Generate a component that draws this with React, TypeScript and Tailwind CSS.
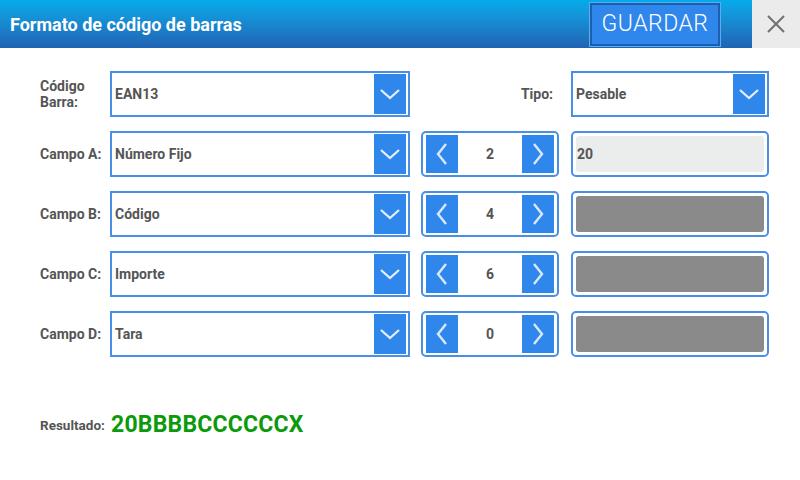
import React from 'react'

const font = { fontFamily: 'Roboto, "Liberation Sans", sans-serif' }

const ChevronDown = () => (
  <svg width="22" height="14" viewBox="0 0 22 14" fill="none">
    <path d="M2 3 L11 11 L20 3" stroke="#e6f0fc" strokeWidth="2.2" />
  </svg>
)

const Arrow: React.FC<{ dir: 'left' | 'right' }> = ({ dir }) => (
  <svg width="14" height="24" viewBox="0 0 14 24" fill="none">
    <path
      d={dir === 'left' ? 'M11 2 L3 12 L11 22' : 'M3 2 L11 12 L3 22'}
      stroke="#dbe8fa"
      strokeWidth="2.4"
    />
  </svg>
)

const Dropdown: React.FC<{ value: string; width: string }> = ({ value, width }) => (
  <div
    className={`${width} h-[46px] border-2 border-[#4a8fe6] bg-white flex items-center justify-between pl-[3px] pr-[2px]`}
  >
    <span className="text-[14px] font-bold text-[#555555]">{value}</span>
    <div className="w-[32px] h-[40px] bg-[#2f87ec] flex items-center justify-center">
      <ChevronDown />
    </div>
  </div>
)

const Stepper: React.FC<{ value: number }> = ({ value }) => (
  <div className="w-[138px] h-[46px] ml-[11px] rounded-[5px] border-2 border-[#4a8fe6] bg-white flex items-center justify-between px-[3px]">
    <div className="w-[32px] h-[38px] bg-[#2f87ec] flex items-center justify-center">
      <Arrow dir="left" />
    </div>
    <span className="text-[14px] font-bold text-[#555555]">{value}</span>
    <div className="w-[32px] h-[38px] bg-[#2f87ec] flex items-center justify-center">
      <Arrow dir="right" />
    </div>
  </div>
)

const Field: React.FC<{ value?: string; filled?: boolean }> = ({ value, filled }) => (
  <div className="w-[198px] h-[46px] ml-[12px] rounded-[5px] border-2 border-[#4a8fe6] bg-white p-[3px]">
    <div
      className={`w-full h-full rounded-[3px] flex items-center pl-[1px] ${
        filled ? 'bg-[#ebecec]' : 'bg-[#8a8a8a]'
      }`}
    >
      <span className="text-[14px] font-bold text-[#555555]">{value}</span>
    </div>
  </div>
)

const campos = [
  { label: 'Campo A:', value: 'Número Fijo', step: 2, field: '20', filled: true },
  { label: 'Campo B:', value: 'Código', step: 4 },
  { label: 'Campo C:', value: 'Importe', step: 6 },
  { label: 'Campo D:', value: 'Tara', step: 0 },
]

export default function App() {
  return (
    <div className="w-[800px] h-[480px] bg-white overflow-hidden" style={font}>
      <header className="h-[48px] flex items-stretch bg-gradient-to-b from-[#03abeb] to-[#1f64b4]">
        <h1 className="flex-1 flex items-center pl-[10px] text-white text-[18px] font-bold">
          Formato de código de barras
        </h1>
        <div className="flex items-center pr-[32px]">
          <button className="w-[130px] h-[43px] bg-[#2f87ec] border-2 border-[#1d5fae] outline outline-1 outline-[#58aef0] text-white text-[23px] font-light tracking-[0.5px]">
            GUARDAR
          </button>
        </div>
        <div className="w-[48px] bg-[#ebebeb] flex items-center justify-center">
          <svg width="20" height="20" viewBox="0 0 20 20">
            <path d="M2 2 L18 18 M18 2 L2 18" stroke="#707070" strokeWidth="2" />
          </svg>
        </div>
      </header>

      <main className="pt-[23px] pl-[40px] flex flex-col gap-[14px]">
        <div className="flex items-center">
          <div className="w-[70px] text-[14px] font-bold text-[#555555] leading-[16px]">
            Código
            <br />
            Barra:
          </div>
          <Dropdown value="EAN13" width="w-[300px]" />
          <div className="w-[143px] text-right text-[14px] font-bold text-[#555555]">Tipo:</div>
          <div className="ml-[18px]">
            <Dropdown value="Pesable" width="w-[198px]" />
          </div>
        </div>

        {campos.map((c) => (
          <div key={c.label} className="flex items-center">
            <div className="w-[70px] text-[14px] font-bold text-[#555555]">{c.label}</div>
            <Dropdown value={c.value} width="w-[300px]" />
            <Stepper value={c.step} />
            <Field value={c.field} filled={c.filled} />
          </div>
        ))}

        <div className="flex items-center mt-[37px]">
          <span className="w-[71px] text-[13.5px] font-bold text-[#555555]">Resultado:</span>
          <span className="text-[23px] font-bold text-[#0a9a0a] tracking-[0.2px]">20BBBBCCCCCCX</span>
        </div>
      </main>
    </div>
  )
}
